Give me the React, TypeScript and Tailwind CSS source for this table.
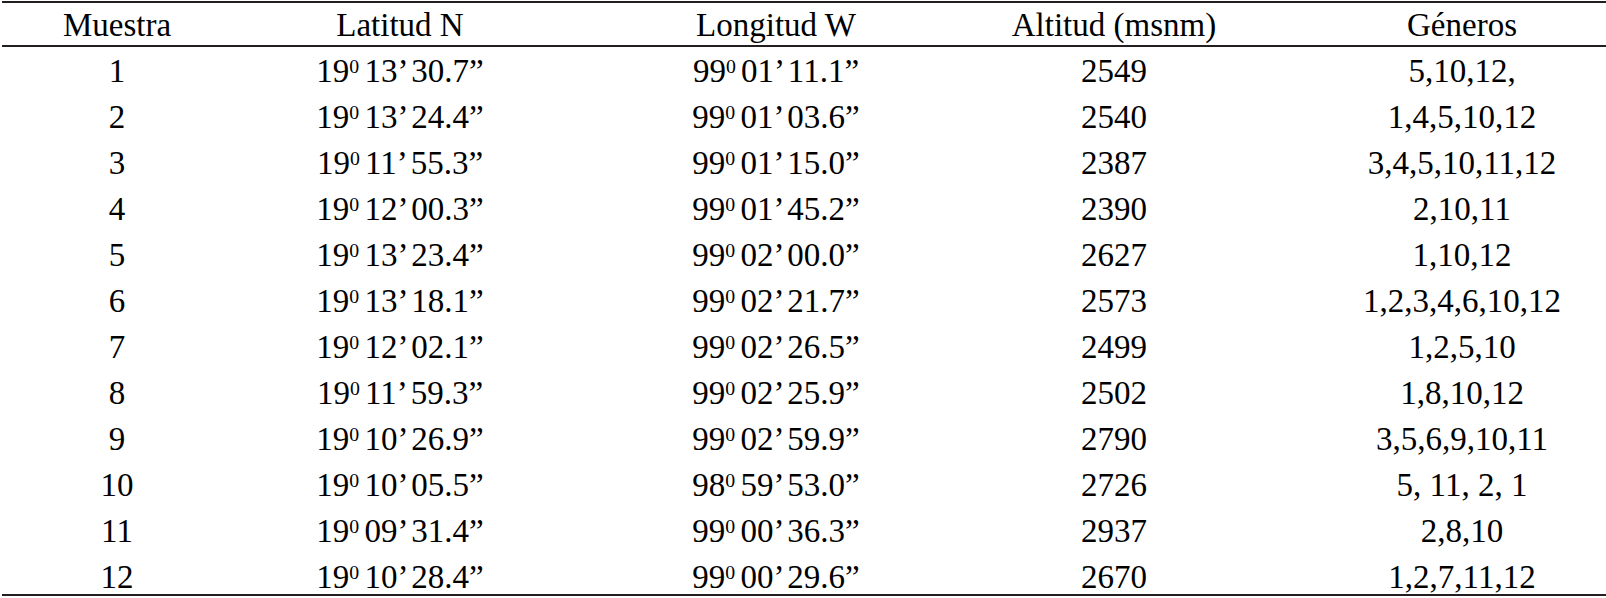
const rows = [
  ["1", "19", "13’ 30.7”", "99", "01’ 11.1”", "2549", "5,10,12,"],
  ["2", "19", "13’ 24.4”", "99", "01’ 03.6”", "2540", "1,4,5,10,12"],
  ["3", "19", "11’ 55.3”", "99", "01’ 15.0”", "2387", "3,4,5,10,11,12"],
  ["4", "19", "12’ 00.3”", "99", "01’ 45.2”", "2390", "2,10,11"],
  ["5", "19", "13’ 23.4”", "99", "02’ 00.0”", "2627", "1,10,12"],
  ["6", "19", "13’ 18.1”", "99", "02’ 21.7”", "2573", "1,2,3,4,6,10,12"],
  ["7", "19", "12’ 02.1”", "99", "02’ 26.5”", "2499", "1,2,5,10"],
  ["8", "19", "11’ 59.3”", "99", "02’ 25.9”", "2502", "1,8,10,12"],
  ["9", "19", "10’ 26.9”", "99", "02’ 59.9”", "2790", "3,5,6,9,10,11"],
  ["10", "19", "10’ 05.5”", "98", "59’ 53.0”", "2726", "5, 11, 2, 1"],
  ["11", "19", "09’ 31.4”", "99", "00’ 36.3”", "2937", "2,8,10"],
  ["12", "19", "10’ 28.4”", "99", "00’ 29.6”", "2670", "1,2,7,11,12"],
];

const cols = "grid grid-cols-[230px_336px_416px_260px_362px]";

function Coord({ deg, rest }: { deg: string; rest: string }) {
  return (
    <span className="[word-spacing:-3px]">
      {deg}
      <span className="relative top-[-0.45em] text-[0.6em]">0</span> {rest}
    </span>
  );
}

export default function App() {
  return (
    <div className="w-[1606px] h-[598px] bg-white pt-px pl-[2px] font-['Liberation_Serif','Times_New_Roman',serif] text-[33px] leading-none text-black">
      <div className="border-t-2 border-b-2 border-[#231f20]">
        <div className={`${cols} h-[44px] items-center pt-[3px] border-b-2 border-[#231f20]`}>
          <div className="text-center">Muestra</div>
          <div className="text-center">Latitud N</div>
          <div className="text-center">Longitud W</div>
          <div className="text-center">Altitud (msnm)</div>
          <div className="pl-[74px] text-center">Géneros</div>
        </div>
        {rows.map((r) => (
          <div key={r[0]} className={`${cols} h-[46px] last:h-[41px] items-start pt-[8px]`}>
            <div className="text-center">{r[0]}</div>
            <div className="text-center">
              <Coord deg={r[1]} rest={r[2]} />
            </div>
            <div className="text-center">
              <Coord deg={r[3]} rest={r[4]} />
            </div>
            <div className="text-center">{r[5]}</div>
            <div className="pl-[74px] text-center">{r[6]}</div>
          </div>
        ))}
      </div>
    </div>
  );
}
